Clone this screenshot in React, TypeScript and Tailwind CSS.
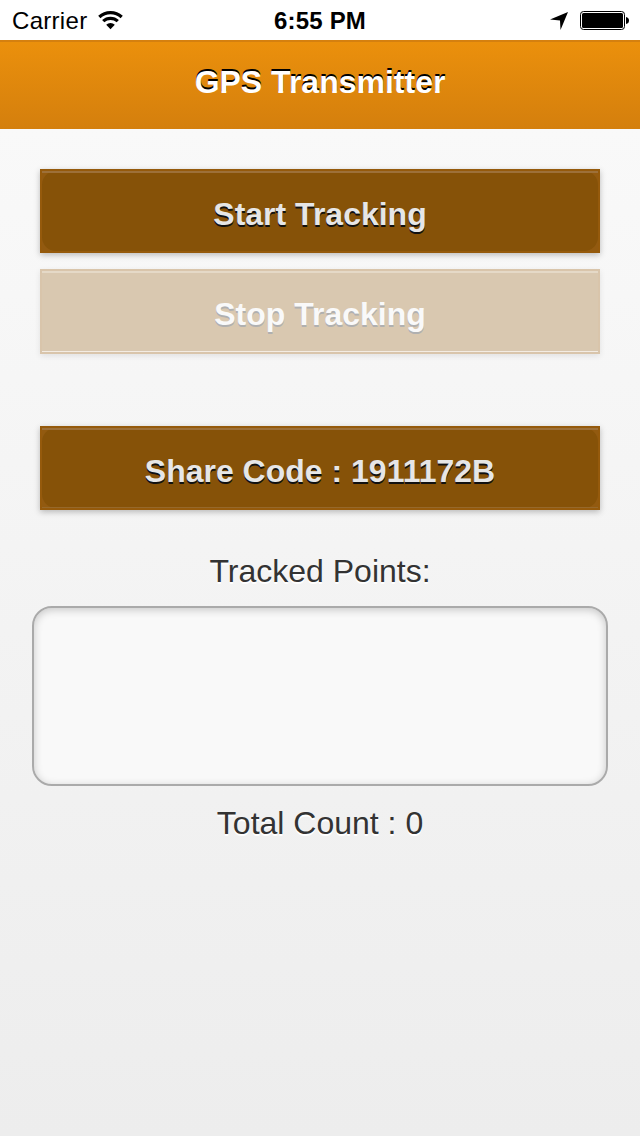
import React from 'react';

interface TrackButtonProps {
  label: string;
  disabled?: boolean;
  bottomLine?: boolean;
}

function TrackButton({ label, disabled = false, bottomLine = false }: TrackButtonProps) {
  if (disabled) {
    return (
      <button
        type="button"
        disabled
        className="flex h-[85px] w-full flex-col border-2 border-[#d9c5ab] bg-[#d9c8b0] shadow-[0_2px_6px_rgba(0,0,0,0.09)]"
      >
        <span className="h-[2px] w-full bg-[#e5d9c7]" />
        <span className="flex w-full flex-1 items-center justify-center pt-[3px] text-[32px] leading-[38px] font-bold text-[#f9f9f9] [text-shadow:0_2px_0_#b0b0b0]">
          {label}
        </span>
        <span className="h-px w-full bg-[#f3ece3]" />
      </button>
    );
  }

  return (
    <button
      type="button"
      className="relative flex h-[84px] w-full flex-col border-2 border-[#955a0c] bg-[#925a10] shadow-[0_2px_6px_rgba(0,0,0,0.25)]"
    >
      <span className="flex w-full flex-1 items-center justify-center rounded-[14px] bg-[#865208] pt-[5px] text-[32px] leading-[38px] font-bold text-[#e6e6e6] [text-shadow:0_2px_0_#111]">
        {label}
      </span>
      {/* bevel lines run over the rounded face, edge to edge */}
      <span className="absolute inset-x-0 top-0 h-[2px] bg-[#9d7039]" />
      {bottomLine && <span className="absolute inset-x-0 bottom-0 h-px bg-[#96682a]" />}
    </button>
  );
}

function StatusBar() {
  return (
    <div className="grid h-10 grid-cols-3 items-center bg-white text-[24px] leading-[28px] text-black">
      <div className="flex items-center pt-[2px] pl-3">
        <span className="w-[76px] tracking-[0.3px]">Carrier</span>
        <svg width="26" height="19" viewBox="0 0 26 19" className="-mt-[2px] ml-[10px]">
          <path d="M1.3 6 A16.5 16.5 0 0 1 23.7 6" fill="none" stroke="#000" strokeWidth="3.2" />
          <path d="M5.2 10.2 A10.6 10.6 0 0 1 19.8 10.2" fill="none" stroke="#000" strokeWidth="3.2" />
          <path d="M8.2 13.8 A6.2 6.2 0 0 1 16.8 13.8 L12.5 18.2 Z" />
        </svg>
      </div>
      <span className="pt-[2px] text-center font-bold tracking-[0.2px] whitespace-nowrap">6:55 PM</span>
      <div className="flex items-center justify-end pt-px pr-[11px]">
        <svg width="18" height="18" viewBox="0 0 18 18" className="mr-3">
          <path d="M18 0 L10.5 18 L10 8.4 L0 7.6 Z" />
        </svg>
        <svg width="49" height="20" viewBox="0 0 49 20">
          <rect x="0.5" y="0.5" width="44" height="18" rx="3" fill="none" stroke="#000" />
          <rect x="2" y="2" width="41" height="15" rx="1.5" />
          <path d="M46 6 Q49 6.5 49 9.5 Q49 12.5 46 13 Z" />
        </svg>
      </div>
    </div>
  );
}

export default function App() {
  return (
    <div className="flex h-[1136px] w-[640px] flex-col overflow-hidden bg-[#eee] font-['Liberation_Sans',Arial,sans-serif]">
      <StatusBar />

      {/* Header */}
      <header className="flex h-[89px] items-center justify-center border-t-2 border-[#d5800f] bg-linear-to-b from-[#eb900c] to-[#d47f0d] pb-[8px]">
        <h1 className="text-[32px] leading-[38px] font-bold text-white [text-shadow:0_-2px_0_#000]">GPS Transmitter</h1>
      </header>

      <main className="flex flex-1 flex-col bg-linear-to-b from-[#f9f9f9] to-[#ededed] px-8 pt-10">
        <div className="flex flex-col px-2">
          <TrackButton label="Start Tracking" />
          <div className="mt-4">
            <TrackButton label="Stop Tracking" disabled />
          </div>
          <div className="mt-[72px]">
            <TrackButton label="Share Code : 1911172B" bottomLine />
          </div>
        </div>

        <p className="mt-[42px] text-center text-[32px] leading-[38px] text-[#333] [text-shadow:0_2px_0_#fff]">
          Tracked Points:
        </p>
        <div className="mt-[16px] h-[180px] rounded-[20px] border-2 border-[#aaa] bg-[#f9f9f9] shadow-[inset_0_2px_8px_rgba(0,0,0,0.2)]" />
        <p className="mt-[18px] text-center text-[32px] leading-[38px] text-[#333] [text-shadow:0_2px_0_#fff]">
          Total Count : 0
        </p>
      </main>
    </div>
  );
}
